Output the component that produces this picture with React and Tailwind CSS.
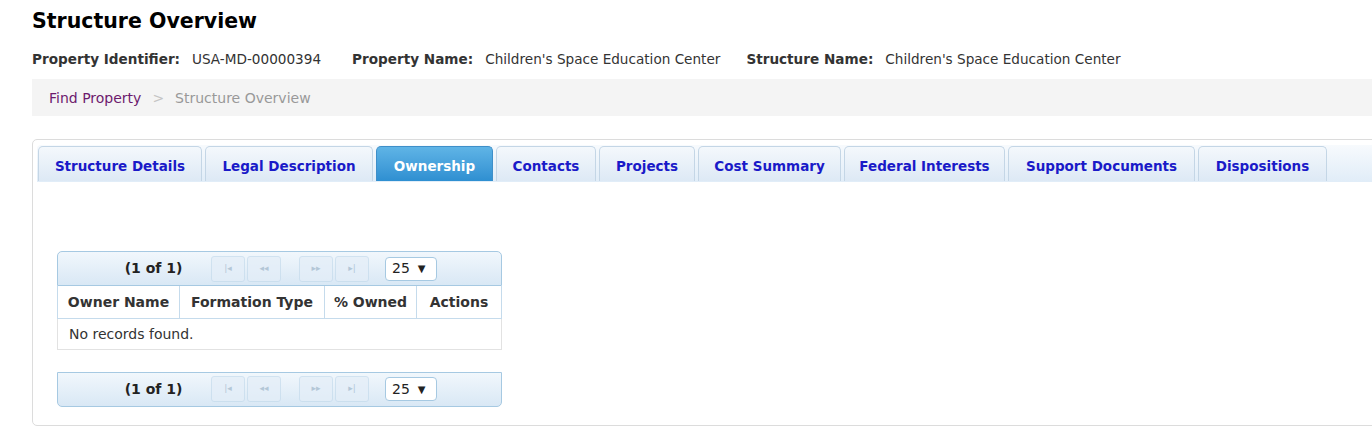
import React from 'react';

const tabs = [
  { label: 'Structure Details', w: 'w-[164px]' },
  { label: 'Legal Description', w: 'w-[168px]' },
  { label: 'Ownership', w: 'w-[117px]', active: true },
  { label: 'Contacts', w: 'w-[100px]' },
  { label: 'Projects', w: 'w-[96px]' },
  { label: 'Cost Summary', w: 'w-[143px]' },
  { label: 'Federal Interests', w: 'w-[161px]' },
  { label: 'Support Documents', w: 'w-[187px]' },
  { label: 'Dispositions', w: 'w-[129px]' },
];

function PagerButton({ children }) {
  return (
    <span className="w-[34px] h-[26px] flex items-center justify-center rounded-[3px] border border-[#c5dbec] bg-[#e4eef8] text-[9px] text-[#9fb6ca] opacity-70">
      {children}
    </span>
  );
}

function Pager({ bottom }) {
  return (
    <div
      className={`h-[35px] flex items-center border border-[#a6c9e2] bg-gradient-to-b from-[#f1f7fc] to-[#d9e8f5] ${
        bottom ? 'rounded-b-[5px]' : 'rounded-t-[5px]'
      }`}
    >
      <span className="w-[153px] text-center pl-[38px] text-[14px] font-bold text-[#222]">(1 of 1)</span>
      <div className="flex gap-[2px]">
        <PagerButton>|◂</PagerButton>
        <PagerButton>◂◂</PagerButton>
      </div>
      <div className="flex gap-[2px] ml-[18px]">
        <PagerButton>▸▸</PagerButton>
        <PagerButton>▸|</PagerButton>
      </div>
      <span className="ml-[16px] w-[52px] h-[24px] flex items-center gap-[8px] pl-[6px] rounded-[4px] border border-[#a6c9e2] bg-white text-[14px] text-[#222]">
        25 <span className="text-[10px]">▼</span>
      </span>
    </div>
  );
}

export default function App() {
  return (
    <div className="w-[1372px] h-[436px] overflow-hidden bg-white font-['DejaVu_Sans',sans-serif] text-[#333]">
      <div className="w-[1420px] pl-[32px]">
        <h1 className="pt-[6px] h-[38px] text-[20.5px] leading-[30px] font-bold text-black">Structure Overview</h1>

        <div className="h-[34px] flex items-center text-[13.6px] pt-[9px]">
          <span className="font-bold text-[#333]">Property Identifier:</span>
          <span className="ml-[12px]">USA-MD-00000394</span>
          <span className="ml-[31px] font-bold">Property Name:</span>
          <span className="ml-[12px]">Children's Space Education Center</span>
          <span className="ml-[26px] font-bold">Structure Name:</span>
          <span className="ml-[12px]">Children's Space Education Center</span>
        </div>

        <div className="mt-[7px] h-[37px] flex items-center pl-[17px] pt-[1px] bg-[#f4f4f4] text-[14px]">
          <span className="text-[#6d1a6d]">Find Property</span>
          <span className="mx-[11px] text-[#c4c4c4]">&gt;</span>
          <span className="text-[#999]">Structure Overview</span>
        </div>

        <div className="mt-[23px] h-[287px] rounded-l-[5px] border border-[#dcdcdc] pt-[5px] pl-[4px]">
          <div className="h-[37px] flex items-end gap-[3px] pl-[1px] rounded-tl-[4px] bg-gradient-to-b from-[#f7fafd] to-[#e1edf8] border-b border-[#e1edf8]">
            {tabs.map((t) => (
              <div
                key={t.label}
                className={`${t.w} h-[35px] flex items-center justify-center pt-[4px] rounded-t-[5px] border border-b-0 text-[13.5px] font-bold ${
                  t.active
                    ? 'border-[#3e8fc9] bg-gradient-to-b from-[#5fb4e6] to-[#2e8fd1] text-white'
                    : 'border-[#c4d6e6] bg-gradient-to-b from-[#f4f8fc] to-[#dde9f5] text-[#1a1ac8]'
                }`}
              >
                {t.label}
              </div>
            ))}
          </div>

          <div className="pt-[69px] pl-[20px] w-[465px]">
            <Pager />
            <table className="w-full border-collapse text-[14px]">
              <thead>
                <tr className="h-[32px] text-[#333]">
                  <th className="w-[122px] pt-[2px] border border-t-0 border-[#c5dbec] font-bold text-center">Owner Name</th>
                  <th className="w-[145px] pt-[2px] border border-t-0 border-[#c5dbec] font-bold text-center">Formation Type</th>
                  <th className="w-[92px] pt-[2px] border border-t-0 border-[#c5dbec] font-bold text-center">% Owned</th>
                  <th className="pt-[2px] border border-t-0 border-[#c5dbec] font-bold text-center">Actions</th>
                </tr>
              </thead>
              <tbody>
                <tr className="h-[31px]">
                  <td colSpan={4} className="pt-[2px] border border-[#e2e2e2] pl-[11px] text-[#333] font-normal">
                    No records found.
                  </td>
                </tr>
              </tbody>
            </table>
            <div className="mt-[22px]">
              <Pager bottom />
            </div>
          </div>
        </div>
      </div>
    </div>
  );
}
